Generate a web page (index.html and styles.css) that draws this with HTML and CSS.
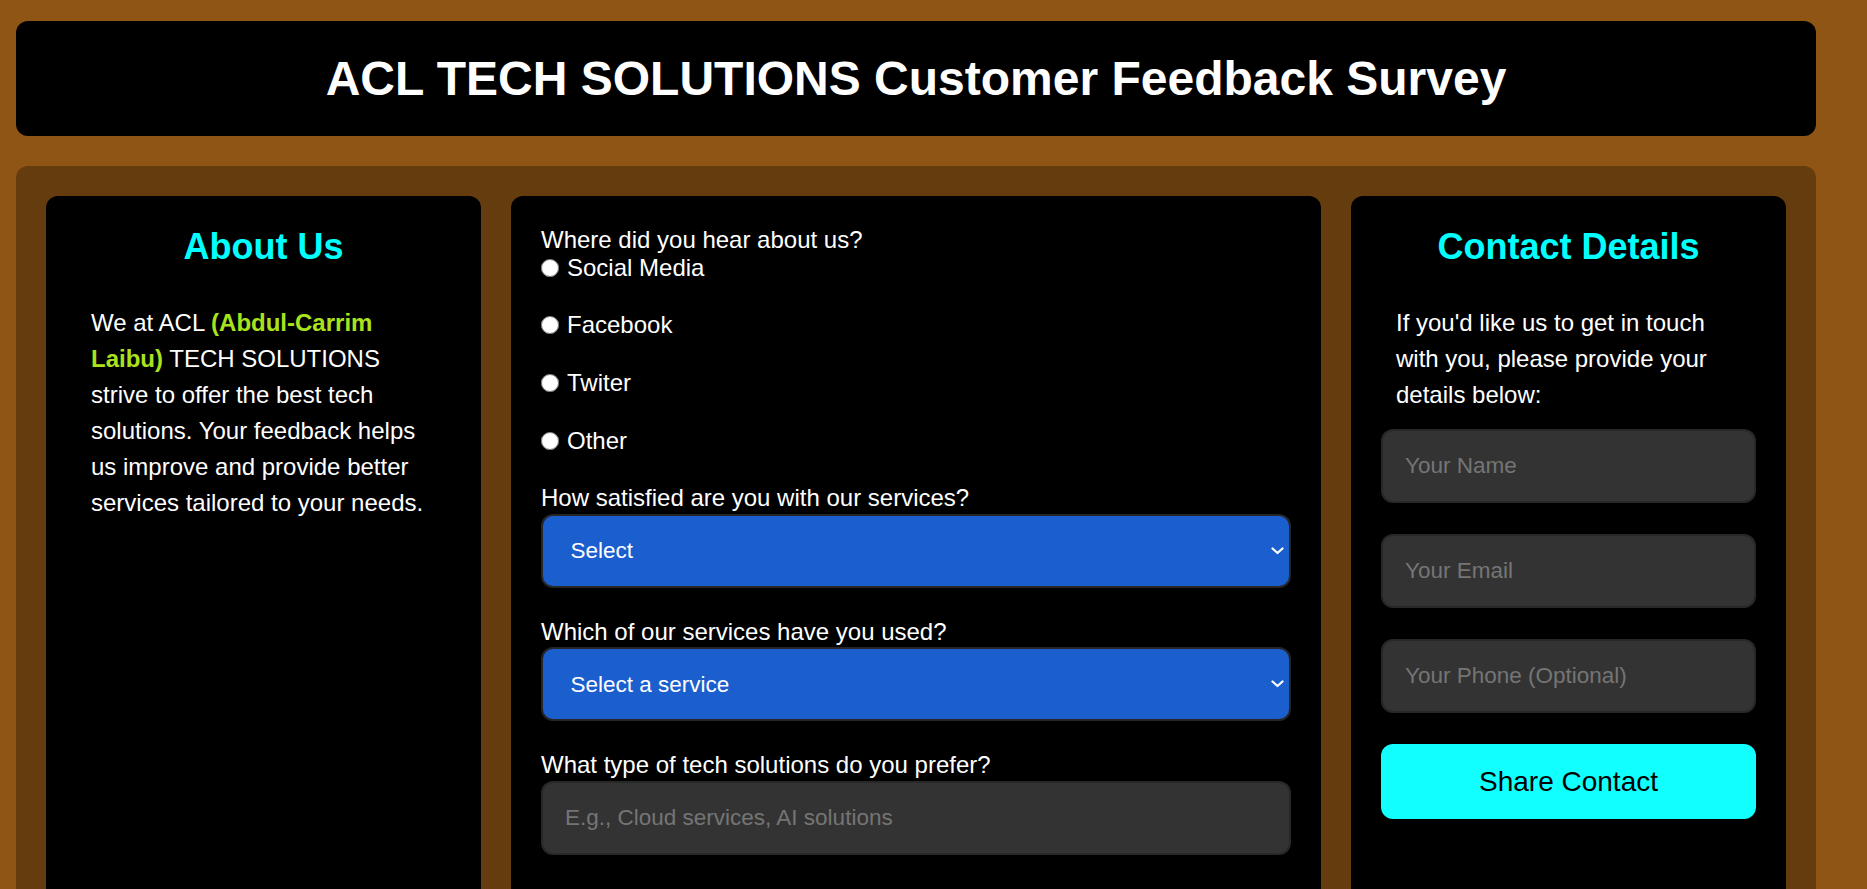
FILE: index.html
```html
<!DOCTYPE html>
<html lang="en">
<head>
<meta charset="utf-8">
<title>ACL TECH SOLUTIONS Customer Feedback Survey</title>
<link rel="stylesheet" href="styles.css">
</head>
<body>
<div class="page">
  <header class="site-header">
    <h1 class="title">ACL TECH SOLUTIONS Customer Feedback Survey</h1>
  </header>
  <main class="panel">
    <section class="card side">
      <h2 class="card-title">About Us</h2>
      <p class="card-text">We at ACL <strong class="hl">(Abdul-Carrim Laibu)</strong> TECH SOLUTIONS strive to offer the best tech solutions. Your feedback helps us improve and provide better services tailored to your needs.</p>
    </section>

    <section class="card survey">
      <div class="q-label">Where did you hear about us?</div>
      <label class="radio-row"><input type="radio" name="source" class="radio"><span>Social Media</span></label>
      <label class="radio-row"><input type="radio" name="source" class="radio"><span>Facebook</span></label>
      <label class="radio-row"><input type="radio" name="source" class="radio"><span>Twiter</span></label>
      <label class="radio-row"><input type="radio" name="source" class="radio"><span>Other</span></label>

      <div class="field">
        <label class="q-label">How satisfied are you with our services?</label>
        <div class="select-wrap">
          <select class="select">
            <option>Select</option>
            <option>Very satisfied</option>
            <option>Satisfied</option>
            <option>Neutral</option>
            <option>Dissatisfied</option>
          </select>
          <svg class="chev" width="13" height="8" viewBox="0 0 13 8"><path d="M1.5 1.5 L6.5 6 L11.5 1.5" fill="none" stroke="#fff" stroke-width="2.2" stroke-linecap="round" stroke-linejoin="round"/></svg>
        </div>
      </div>

      <div class="field">
        <label class="q-label">Which of our services have you used?</label>
        <div class="select-wrap">
          <select class="select">
            <option>Select a service</option>
            <option>Cloud services</option>
            <option>AI solutions</option>
            <option>Web development</option>
          </select>
          <svg class="chev" width="13" height="8" viewBox="0 0 13 8"><path d="M1.5 1.5 L6.5 6 L11.5 1.5" fill="none" stroke="#fff" stroke-width="2.2" stroke-linecap="round" stroke-linejoin="round"/></svg>
        </div>
      </div>

      <div class="field last">
        <label class="q-label">What type of tech solutions do you prefer?</label>
        <input type="text" class="text-input" placeholder="E.g., Cloud services, AI solutions">
      </div>
    </section>

    <section class="card side">
      <h2 class="card-title">Contact Details</h2>
      <p class="card-text contact-text">If you'd like us to get in touch with you, please provide your details below:</p>
      <div class="contact-form">
        <input type="text" class="text-input" placeholder="Your Name">
        <input type="email" class="text-input" placeholder="Your Email">
        <input type="tel" class="text-input" placeholder="Your Phone (Optional)">
        <button type="button" class="btn">Share Contact</button>
      </div>
    </section>
  </main>
</div>
</body>
</html>
```

FILE: styles.css
```css
* { box-sizing: border-box; }

html, body {
  margin: 0;
  padding: 0;
}

body {
  background: #8f5514;
  font-family: "Liberation Sans", Arial, Helvetica, sans-serif;
  color: #fff;
}

.page {
  width: 1800px;
  margin-left: 16px;
  padding-top: 21px;
}

.site-header {
  background: #000;
  border-radius: 12px;
  padding: 30px 0;
}

.title {
  margin: 0;
  font-size: 48px;
  line-height: 55px;
  font-weight: 700;
  text-align: center;
  color: #fff;
}

.panel {
  margin-top: 30px;
  background: #653c0e;
  border-radius: 12px;
  padding: 30px;
  display: flex;
  gap: 30px;
  align-items: stretch;
}

.card {
  background: #000;
  border-radius: 12px;
  padding: 30px;
}

.side {
  flex: 0 0 435px;
}

.survey {
  flex: 1 1 auto;
  display: flex;
  flex-direction: column;
  padding-bottom: 120px;
}

.card-title {
  margin: 0 0 38px;
  font-size: 36px;
  line-height: 41.4px;
  font-weight: 700;
  color: #00ffff;
  text-align: center;
}

.card-text {
  margin: 0;
  padding: 0 15px;
  font-size: 24px;
  line-height: 36px;
}

.hl {
  color: #aae31c;
  font-weight: 700;
}

.contact-text {
  margin-bottom: 16px;
}

.q-label {
  display: block;
  font-size: 24px;
  line-height: 27.6px;
}

.radio-row {
  display: flex;
  align-items: center;
  height: 27.6px;
  font-size: 24px;
  margin-bottom: 30px;
  padding-top: 1px;
}

.radio {
  width: 18px;
  height: 18px;
  margin: 0 8px 0 0;
}

.field {
  display: flex;
  flex-direction: column;
  gap: 2px;
  margin-bottom: 30px;
}

.field.last {
  margin-bottom: 0;
}

.select-wrap {
  position: relative;
}

.select {
  appearance: none;
  -webkit-appearance: none;
  width: 100%;
  height: 74px;
  background: #1b5ece;
  color: #fff;
  border: 2px solid #262626;
  border-radius: 12px;
  padding: 0 40px 0 27.5px;
  font-family: "Liberation Sans", Arial, sans-serif;
  font-size: 22.5px;
  outline: none;
}

.chev {
  position: absolute;
  right: 7px;
  top: 50%;
  transform: translateY(-50%);
  pointer-events: none;
}

.text-input {
  display: block;
  width: 100%;
  height: 74px;
  background: #333;
  color: #fff;
  border: 2px solid #282828;
  border-radius: 12px;
  padding: 0 22px;
  font-family: "Liberation Sans", Arial, sans-serif;
  font-size: 22.5px;
  outline: none;
}

.text-input::placeholder {
  color: #757575;
}

.contact-form {
  display: flex;
  flex-direction: column;
  gap: 31px;
}

.btn {
  display: block;
  width: 100%;
  height: 75px;
  background: #12ffff;
  color: #000;
  border: none;
  border-radius: 12px;
  font-family: "Liberation Sans", Arial, sans-serif;
  font-size: 28px;
  cursor: pointer;
}
```
